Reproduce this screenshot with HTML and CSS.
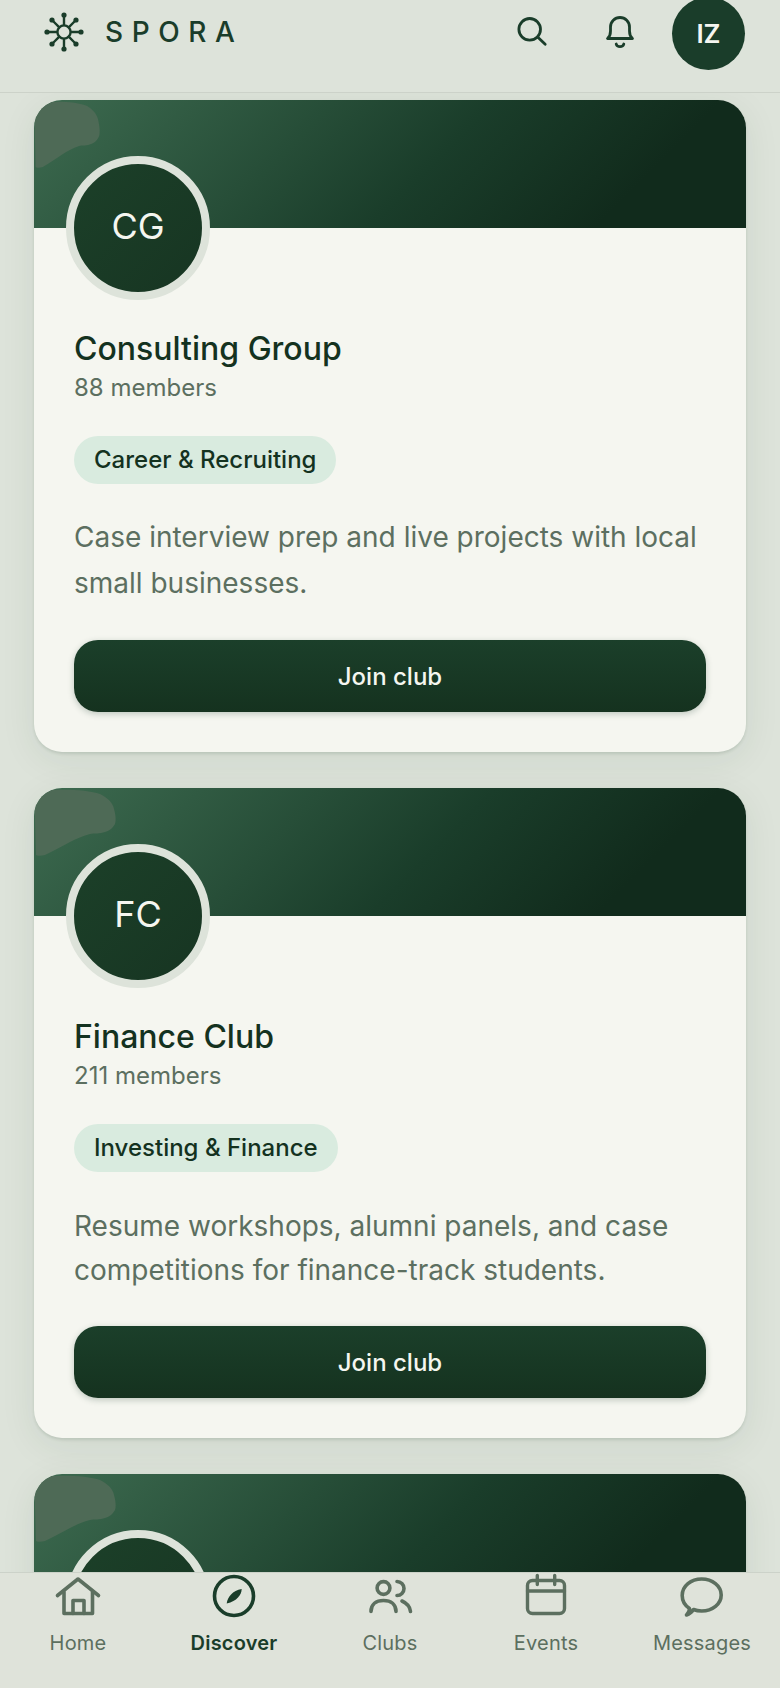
FILE: index.html
```html
<!DOCTYPE html>
<html lang="en">
<head>
    <meta charset="UTF-8">
    <meta name="viewport" content="width=device-width, initial-scale=1.0">
    <title>Spora - Discover</title>
    <link rel="stylesheet" href="styles.css">
</head>
<body>
    <header class="topbar">
        <div class="brand">
            <svg class="brand-icon" viewBox="0 0 40 40" fill="none" stroke="currentColor" stroke-width="2.4" stroke-linecap="round">
                <circle cx="20" cy="20" r="6.6"/>
                <path d="M20 13V3M20 27V37M13 20H3M27 20H37M15.3 15.3L8 8M24.7 15.3L32 8M15.3 24.7L8 32M24.7 24.7L32 32"/>
                <g fill="currentColor" stroke="none">
                    <circle cx="20" cy="3" r="2.6"/>
                    <circle cx="20" cy="37" r="2.6"/>
                    <circle cx="3" cy="20" r="2.6"/>
                    <circle cx="37" cy="20" r="2.6"/>
                    <circle cx="8" cy="8" r="2.6"/>
                    <circle cx="32" cy="8" r="2.6"/>
                    <circle cx="8" cy="32" r="2.6"/>
                    <circle cx="32" cy="32" r="2.6"/>
                </g>
            </svg>
            <span class="brand-name">SPORA</span>
        </div>
        <div class="topbar-actions">
            <svg class="action-icon" viewBox="0 0 36 36" fill="none" stroke="currentColor" stroke-width="2.8" stroke-linecap="round">
                <circle cx="15.7" cy="16.3" r="10.8"/>
                <path d="M23.6 24L31.2 31.2"/>
            </svg>
            <svg class="action-icon" viewBox="0 0 36 36" fill="none" stroke="currentColor" stroke-width="2.8" stroke-linecap="round" stroke-linejoin="round">
                <path d="M5.5 25.5H30.5C28 23.5 27.5 21 27.5 18V14A9.5 9.5 0 0 0 8.5 14V18C8.5 21 8 23.5 5.5 25.5Z"/>
                <path d="M14.2 31C15 34.5 21 34.5 21.8 31"/>
            </svg>
            <div class="user-avatar">IZ</div>
        </div>
    </header>

    <main class="club-list">
        <article class="club-card">
            <div class="club-banner">
                <svg class="banner-blot blot-small" viewBox="0 0 82 68" preserveAspectRatio="none">
                    <path d="M16 2C34 1 56 2 66 6C74 10 79 15 80 21C82 28 82 33 81 36C78 41 75 43 71 44C66 46 60 45 56 46C48 48 42 51 36 54C28 58 20 63 11 67C7 68 3 68 2 67L0 0Z"/>
                </svg>
            </div>
            <div class="club-avatar">CG</div>
            <div class="club-body">
                <h2 class="club-name">Consulting Group</h2>
                <p class="club-members">88 members</p>
                <span class="club-tag">Career &amp; Recruiting</span>
                <p class="club-desc desc-loose">Case interview prep and live projects with local small businesses.</p>
                <button class="join-button">Join club</button>
            </div>
        </article>

        <article class="club-card">
            <div class="club-banner">
                <svg class="banner-blot" viewBox="0 0 82 68" preserveAspectRatio="none">
                    <path d="M16 2C34 1 56 2 66 6C74 10 79 15 80 21C82 28 82 33 81 36C78 41 75 43 71 44C66 46 60 45 56 46C48 48 42 51 36 54C28 58 20 63 11 67C7 68 3 68 2 67L0 0Z"/>
                </svg>
            </div>
            <div class="club-avatar">FC</div>
            <div class="club-body">
                <h2 class="club-name">Finance Club</h2>
                <p class="club-members">211 members</p>
                <span class="club-tag">Investing &amp; Finance</span>
                <p class="club-desc desc-tight">Resume workshops, alumni panels, and case competitions for finance-track students.</p>
                <button class="join-button">Join club</button>
            </div>
        </article>

        <article class="club-card">
            <div class="club-banner">
                <svg class="banner-blot" viewBox="0 0 82 68" preserveAspectRatio="none">
                    <path d="M16 2C34 1 56 2 66 6C74 10 79 15 80 21C82 28 82 33 81 36C78 41 75 43 71 44C66 46 60 45 56 46C48 48 42 51 36 54C28 58 20 63 11 67C7 68 3 68 2 67L0 0Z"/>
                </svg>
            </div>
            <div class="club-avatar"></div>
        </article>
    </main>

    <nav class="bottom-nav">
        <a class="nav-item">
            <svg class="nav-icon" viewBox="0 0 48 48" fill="none" stroke="currentColor" stroke-width="3.6" stroke-linecap="round" stroke-linejoin="round">
                <path d="M3.5 23.5L24 7L44.5 23.5"/>
                <path d="M10 20V41.5H38.5V20"/>
                <path d="M19 41.5V28.5H30V41.5"/>
            </svg>
            <span>Home</span>
        </a>
        <a class="nav-item active">
            <svg class="nav-icon" viewBox="0 0 48 48" fill="none" stroke="currentColor" stroke-width="3.6">
                <circle cx="24" cy="24" r="19.5"/>
                <path d="M31.7 17C31.5 23 27 29 16.7 31.5C17.5 25 22.5 18.5 31.7 17Z" fill="currentColor" stroke="none"/>
            </svg>
            <span>Discover</span>
        </a>
        <a class="nav-item">
            <svg class="nav-icon" viewBox="0 0 48 48" fill="none" stroke="currentColor" stroke-width="3.6" stroke-linecap="round">
                <circle cx="17.5" cy="16" r="6.4"/>
                <path d="M5 39.5C5 32.5 10 28.5 17.5 28.5S30 32.5 30 39.5"/>
                <path d="M31 9.5A7 7 0 0 1 31 23.5"/>
                <path d="M36 29C40.5 31 44 35 44.5 39.5"/>
            </svg>
            <span>Clubs</span>
        </a>
        <a class="nav-item">
            <svg class="nav-icon" viewBox="0 0 48 48" fill="none" stroke="currentColor" stroke-width="3.4" stroke-linecap="round" stroke-linejoin="round">
                <rect x="5.5" y="8.5" width="37" height="33" rx="5"/>
                <path d="M15.3 3.5V12.5M32.7 3.5V12.5M5.5 19H42.5"/>
            </svg>
            <span>Events</span>
        </a>
        <a class="nav-item">
            <svg class="nav-icon" viewBox="0 0 48 48" fill="none" stroke="currentColor" stroke-width="3.6" stroke-linecap="round" stroke-linejoin="round">
                <path d="M8.5 43C10.5 41 11.5 39 11.5 36.5C7 33.5 4.2 28.5 4.2 23.5C4.2 14 13 7 23.7 7S43.2 14 43.2 23S34.5 39 23.7 39C20.5 39 18 38.5 15.5 37.5C13.5 40.5 11.5 42 8.5 43Z"/>
            </svg>
            <span>Messages</span>
        </a>
    </nav>
</body>
</html>
```

FILE: styles.css
```css
* {
    box-sizing: border-box;
}

body {
    margin: 0;
    height: 100vh;
    display: flex;
    flex-direction: column;
    overflow: hidden;
    font-family: 'Inter', sans-serif;
    background-color: #dde3da;
    color: #14321f;
}

/* top bar */
.topbar {
    flex: none;
    height: 93px;
    padding: 0 35px 0 44px;
    display: flex;
    justify-content: space-between;
    align-items: flex-start;
    background-color: #dde3da;
    border-bottom: 1px solid #ccd2c9;
    position: relative;
    z-index: 2;
}

.brand {
    height: 64px;
    display: flex;
    align-items: center;
    gap: 21px;
    color: #1a3d2a;
}

.brand-icon {
    width: 40px;
    height: 40px;
}

.brand-name {
    font-size: 28px;
    font-weight: 500;
    letter-spacing: 8.6px;
}

.topbar-actions {
    display: flex;
    align-items: flex-start;
    gap: 52px;
    margin-top: -3px;
}

.action-icon {
    width: 36px;
    height: 36px;
    margin-top: 16px;
    color: #1a3d2a;
}

.user-avatar {
    width: 73px;
    height: 73px;
    margin-left: -18px;
    border-radius: 50%;
    background-color: #1a3d2a;
    color: #f5f6f0;
    font-size: 26px;
    font-weight: 600;
    display: flex;
    align-items: center;
    justify-content: center;
}

/* club cards */
.club-list {
    flex: 1;
    min-height: 0;
    overflow: hidden;
    padding: 7px 34px 0;
    display: flex;
    flex-direction: column;
    gap: 36px;
}

.club-card {
    flex: none;
    background-color: #f5f6f0;
    border-radius: 28px;
    box-shadow: 0 2px 3px rgba(26, 61, 42, 0.12), 0 8px 36px rgba(26, 61, 42, 0.08);
}

.club-banner {
    height: 128px;
    border-radius: 28px 28px 0 0;
    overflow: hidden;
    background: linear-gradient(135deg, #3d6b50 0%, #1a3d2a 55%, #112b1c 82%);
}

.banner-blot {
    display: block;
    width: 82px;
    height: 68px;
    fill: #4e6a56;
}

.blot-small {
    width: 66px;
}

.club-avatar {
    width: 144px;
    height: 144px;
    margin: -72px 0 0 32px;
    padding-bottom: 4px;
    border: 8px solid #dde3da;
    border-radius: 50%;
    background: linear-gradient(135deg, #1c4029, #173522);
    color: #f5f6f0;
    font-size: 36px;
    display: flex;
    align-items: center;
    justify-content: center;
    position: relative;
}

.club-body {
    padding: 29px 40px 40px;
}

.club-name {
    margin: 0;
    font-size: 32px;
    line-height: 40px;
    font-weight: 500;
}

.club-members {
    margin: 3px 0 0;
    font-size: 24px;
    line-height: 32px;
    color: #5c6f60;
}

.club-tag {
    display: inline-block;
    margin-top: 32px;
    padding: 0 20px;
    height: 48px;
    line-height: 48px;
    border-radius: 24px;
    background-color: #d9ebdf;
    font-size: 24px;
    font-weight: 500;
}

.club-desc {
    margin: 30px 0 34px;
    font-size: 28px;
    color: #5c6f60;
}

.desc-loose {
    line-height: 46px;
}

.desc-tight {
    margin-top: 32px;
    line-height: 44px;
}

.join-button {
    display: block;
    width: 100%;
    height: 72px;
    border: none;
    border-radius: 24px;
    background: linear-gradient(180deg, #1b3f2a, #15321f);
    box-shadow: 0 2px 6px rgba(26, 61, 42, 0.25);
    color: #f5f6f0;
    font-family: inherit;
    font-size: 24px;
    font-weight: 500;
}

/* bottom nav */
.bottom-nav {
    flex: none;
    height: 116px;
    display: grid;
    grid-template-columns: repeat(5, 1fr);
    background-color: #dfe3da;
    border-top: 1px solid #ccd2c9;
    position: relative;
    z-index: 2;
}

.nav-item {
    display: flex;
    flex-direction: column;
    align-items: center;
    gap: 8px;
    color: #5c6f5f;
    font-size: 20px;
    line-height: 30px;
    letter-spacing: 0.2px;
}

.nav-item.active {
    color: #1a3d2a;
    font-weight: 600;
}

.nav-icon {
    width: 48px;
    height: 48px;
    margin-top: -1px;
    display: block;
}
```
